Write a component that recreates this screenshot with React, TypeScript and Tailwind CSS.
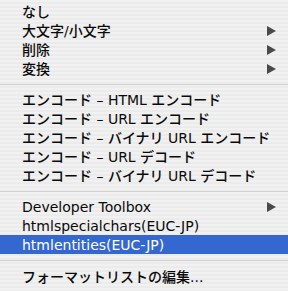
import React from "react";

const font = { fontFamily: '"Lucida Grande", "DejaVu Sans", "Noto Sans CJK JP", sans-serif' };

function Arrow({ white }: { white?: boolean }) {
  return (
    <svg width="9" height="10" viewBox="0 0 9 10" className="shrink-0">
      <polygon points="0,0 9,5 0,10" fill={white ? "#fff" : "#4a4a4a"} />
    </svg>
  );
}

function Item({ label, sub, active }: { label: string; sub?: boolean; active?: boolean }) {
  return (
    <div
      className={
        "h-[19px] flex items-center justify-between pl-[22px] pr-[12px] text-[14px] font-medium leading-none whitespace-nowrap " +
        (active ? "bg-[#3468d0] text-white" : "text-[#0a0a0a]")
      }
    >
      <span>{label}</span>
      {sub && <Arrow white={active} />}
    </div>
  );
}

function Sep() {
  return (
    <div className="h-[12px] flex flex-col justify-center">
      <div className="h-px bg-[#d2d2d2]" />
    </div>
  );
}

export default function App() {
  return (
    <div
      className="w-[288px] h-[291px] overflow-hidden bg-[#efefef] bg-[image:repeating-linear-gradient(to_bottom,#f1f1f1_0px,#f1f1f1_2px,#ebebeb_2px,#ebebeb_4px)] pt-[2px] flex flex-col"
      style={font}
    >
      <Item label="なし" />
      <Item label="大文字/小文字" sub />
      <Item label="削除" sub />
      <Item label="変換" sub />
      <Sep />
      <Item label="エンコード – HTML エンコード" />
      <Item label="エンコード – URL エンコード" />
      <Item label="エンコード – バイナリ URL エンコード" />
      <Item label="エンコード – URL デコード" />
      <Item label="エンコード – バイナリ URL デコード" />
      <Sep />
      <Item label="Developer Toolbox" sub />
      <Item label="htmlspecialchars(EUC-JP)" />
      <Item label="htmlentities(EUC-JP)" active />
      <div className="h-[13px] flex flex-col justify-center">
        <div className="h-px bg-[#d2d2d2]" />
      </div>
      <Item label="フォーマットリストの編集..." />
    </div>
  );
}
